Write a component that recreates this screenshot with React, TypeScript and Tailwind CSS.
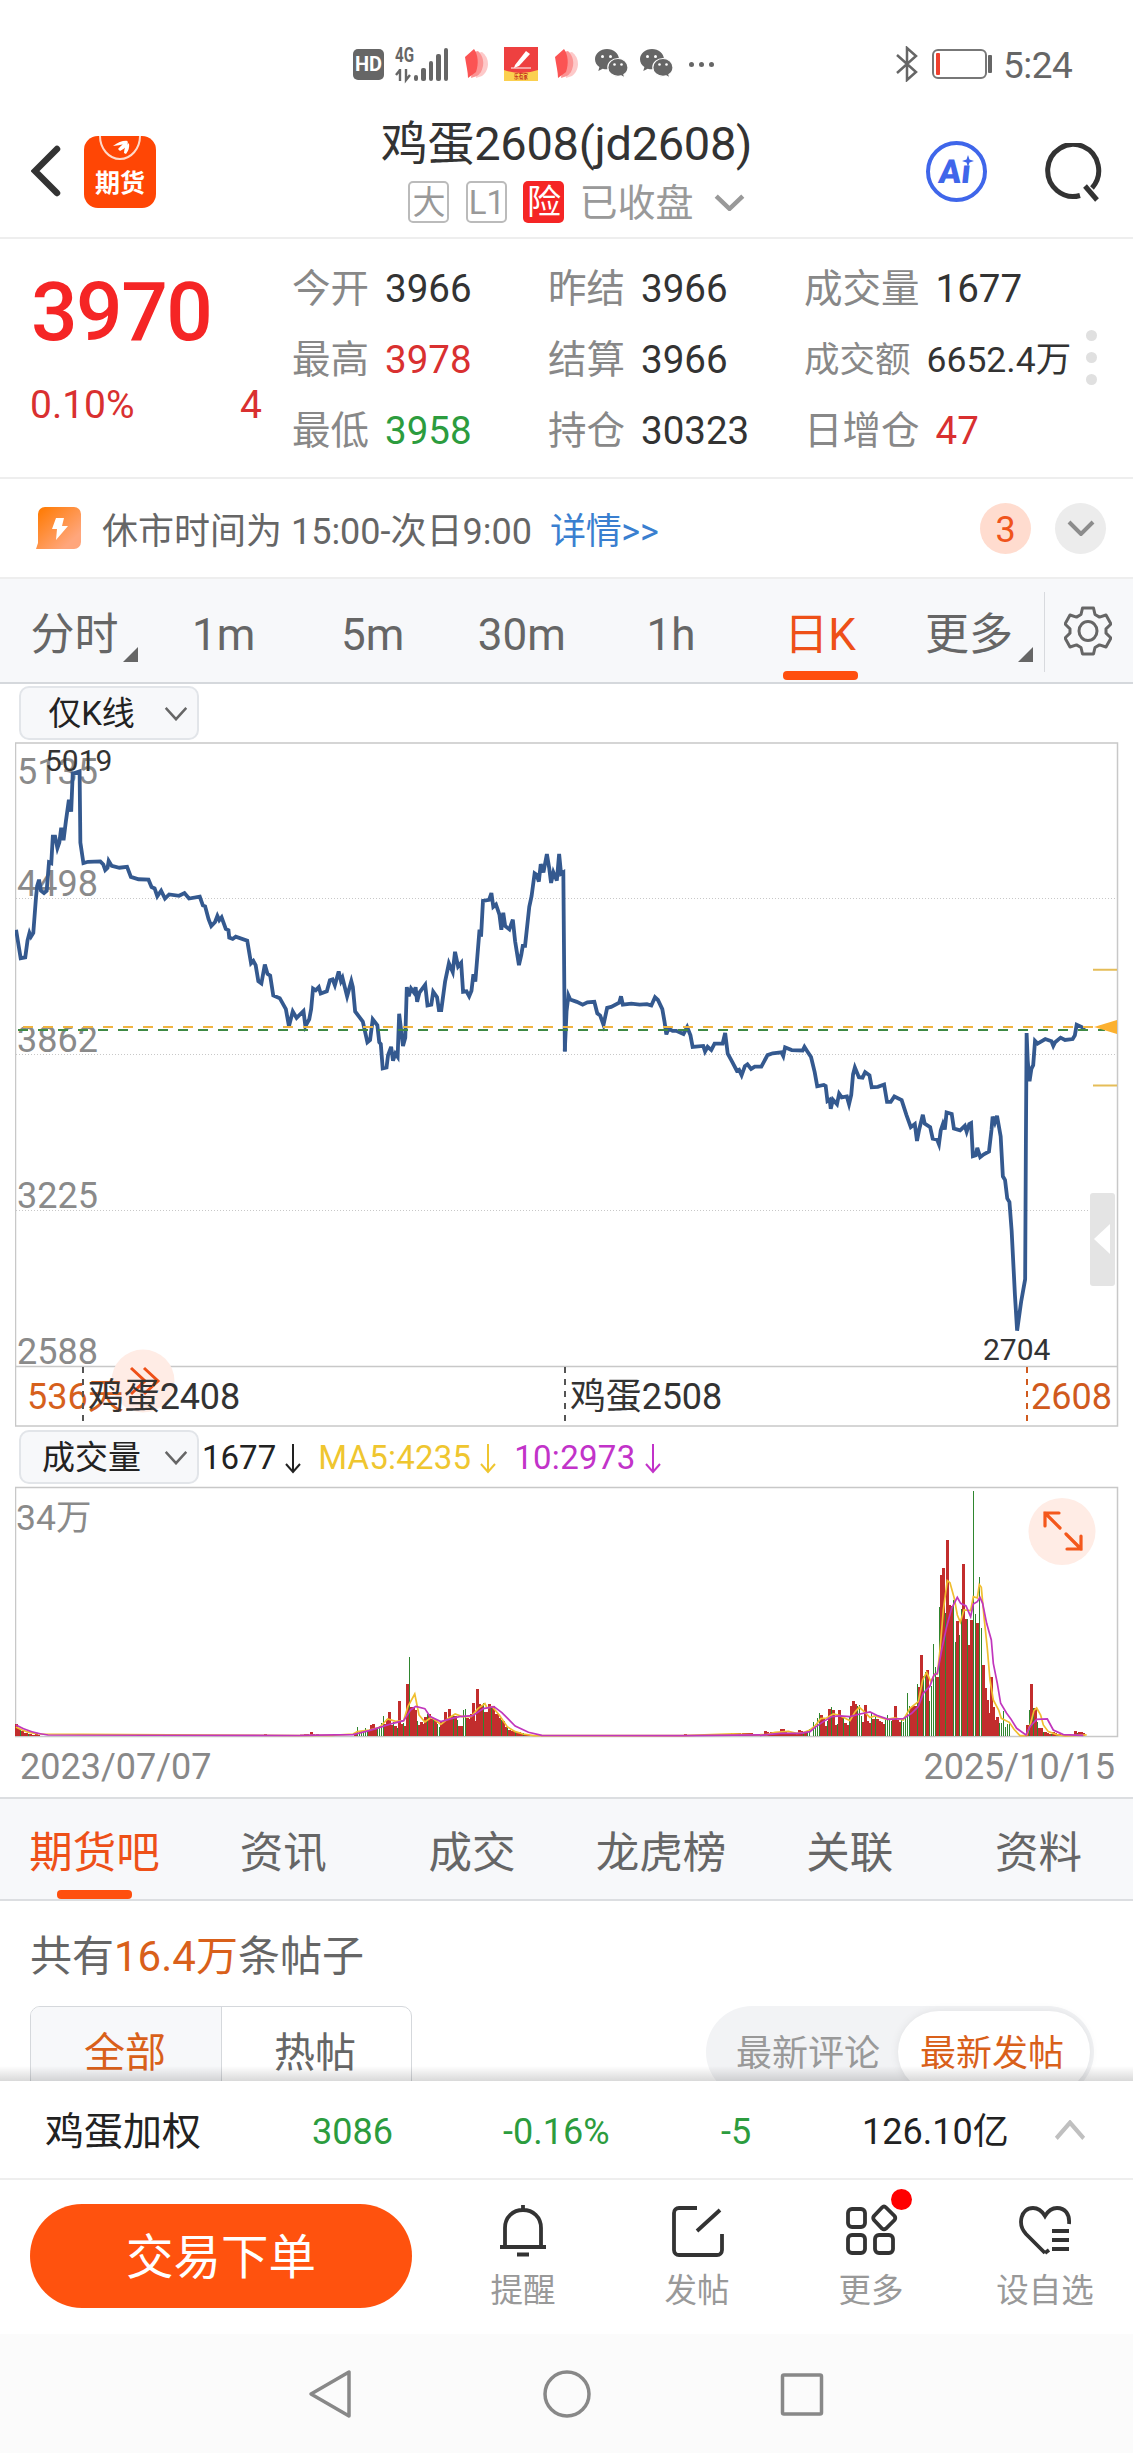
import React, { useState } from 'react';

const FONT = 'font-[Roboto,"Noto_Sans_CJK_SC",sans-serif]';

interface Quote {
  label: string;
  value: string;
  color?: string;
  small?: boolean;
}

const quotes: Quote[][] = [
  [
    { label: '今开', value: '3966' },
    { label: '最高', value: '3978', color: 'text-[#d93030]' },
    { label: '最低', value: '3958', color: 'text-[#2c9c3e]' },
  ],
  [
    { label: '昨结', value: '3966' },
    { label: '结算', value: '3966' },
    { label: '持仓', value: '30323' },
  ],
  [
    { label: '成交量', value: '1677' },
    { label: '成交额', value: '6652.4万', small: true },
    { label: '日增仓', value: '47', color: 'text-[#d93030]' },
  ],
];

const periods = ['分时', '1m', '5m', '30m', '1h', '日K', '更多'];
const sections = ['期货吧', '资讯', '成交', '龙虎榜', '关联', '资料'];

// price line, split at the 2508 contract switch
const priceLeft =
  '42,435 54,497 66,495 72,458 77,442 81,450 87,442 94,365 97,340 102,326 107,350 115,355 122,350 128,288 134,290 138,232 144,232 150,257 155,245 160,213 166,240 172,200 180,152 186,178 190,95 208,90 210,245 218,290 230,287 262,286 270,293 275,305 281,300 284,285 292,296 312,300 332,298 342,320 362,325 388,326 396,342 404,345 411,362 421,350 431,367 442,358 468,361 482,355 494,367 522,363 530,382 536,384 545,412 552,427 562,418 568,405 573,414 579,408 590,433 597,436 599,452 608,455 616,450 646,459 656,508 662,503 668,512 675,547 683,552 692,511 699,531 706,535 714,578 731,584 747,608 755,645 765,613 775,627 793,612 798,645 808,630 813,608 818,563 825,567 833,560 838,574 854,569 862,545 869,543 875,556 885,526 891,547 895,540 907,580 918,547 922,560 928,613 948,635 960,680 967,675 974,630 986,643 991,680 995,684 1000,737 1010,735 1014,708 1022,690 1027,720 1033,705 1039,712 1043,618 1053,688 1059,670 1063,560 1068,580 1074,563 1082,572 1086,560 1090,592 1096,572 1111,555 1117,600 1127,598 1132,570 1142,582 1147,610 1153,610 1163,548 1173,508 1183,527 1189,483 1197,515 1205,507 1210,570 1219,569 1226,580 1232,568 1237,532 1242,548 1253,435 1257,450 1262,372 1278,370 1284,355 1289,385 1296,380 1305,402 1310,435 1315,398 1320,427 1331,434 1340,413 1346,460 1356,512 1362,490 1366,470 1372,470 1383,385 1389,362 1397,312 1402,315 1408,330 1413,292 1420,310 1429,270 1435,300 1440,333 1446,310 1455,328 1461,270 1466,313 1472,310 1476,700';
const priceRight =
  '13,700 18,612 23,578 28,587 46,592 62,598 75,593 94,592 102,617 110,622 119,642 129,605 140,603 162,594 167,580 172,598 195,596 218,598 238,597 250,600 260,582 268,588 280,608 286,635 291,663 297,650 308,655 318,655 338,662 348,647 357,665 363,690 392,688 397,700 404,690 414,697 423,683 445,683 452,660 459,705 468,718 484,742 490,740 497,752 506,732 513,728 523,738 533,733 551,733 568,708 582,704 606,702 611,710 616,691 634,697 664,698 669,690 677,700 687,712 697,745 704,776 722,773 727,775 732,808 738,805 741,825 747,805 758,815 764,792 771,800 785,798 791,815 797,795 802,750 807,735 818,756 828,757 835,745 847,752 853,778 870,777 887,772 895,810 905,810 915,798 935,806 948,838 960,865 971,858 977,895 983,870 993,838 998,857 1013,865 1020,890 1032,892 1037,902 1042,872 1048,858 1053,870 1058,833 1072,836 1078,868 1095,872 1108,862 1113,875 1120,858 1125,856 1130,928 1138,926 1142,910 1150,930 1160,924 1174,918 1181,870 1184,842 1190,855 1196,840 1206,885 1212,972 1218,980 1224,1020 1230,1028 1236,1090 1245,1230 1251,1308 1262,1245 1273,1196 1275,900 1277,660 1280,720 1285,765 1290,738 1295,730 1300,677 1307,683 1328,673 1345,678 1350,688 1355,680 1370,670 1382,675 1403,673 1409,665 1414,642 1428,647 1436,652';

// volume bars: positive = up day, negative = down day
const volumeRuns: { start: number; step: number; bars: number[] }[] = [
  { start: 16, step: 2, bars: [12, 8, -6, 5, 3, 3, -2, 2, 1, 1, 2, 1] },
  { start: 265, step: 2, bars: [2, 0, 0, 0, 0, 0, 0, 0, 0, 0, 0, 0, 0, 0, 0, 0, 0, 0, 0, 0, 2, 2, 0, 4, 2, 0, 2] },
  {
    start: 355, step: 2,
    bars: [
      3, -9, -4, -5, -6, -8, -5, 6, 11, 12, 7, -8, -10, -13, -20, 12, 17, 24, 11, -14, 10, -8, 35, 12, -13, 10, 52, -79, 29, 28, 26,
      -15, 11, 14, 12, 19, -22, 22, 17, -17, 16, -12, -9, 14, 15, 24, 18, 27, 20, -21, 20, -16, 10, 10, -26, -27, 18, 17, 22, 33, 15,
      47, 32, 31, -33, 24, 24, 32, -30, 30, 22, 22, 18, -16, 15, 9, -9, 6, 5, 5, -4, 4, 4, 3, -3, 2, 2, 1,
    ],
  },
  { start: 685, step: 2, bars: [2, 0, 0, 0, 0, 0, 0, 0, 0, 1, 2, 1, -1, 2, 1, 2, 1, 1, 2, 1, 1, 2, 2, -3, 3, 3, 3, 3, 2, 3, 3, 3, 3, 3, 2, 2, 2, 1, 1, 2, 5, 4, 2, 4, 3, 2, 2, 2, 7, 7, 5, 2, 3, 3, 2, 2, 2, 6, 5, -4, 4, -5, -7] },
  {
    start: 813, step: 2,
    bars: [
      -14, -12, -18, -23, 21, 17, 10, -15, 27, -29, 26, 11, -12, 26, 19, -20, 13, 11, -20, 30, 35, 32, -30, -31, -20, 14, 31, 15, 13,
      -24, 17, -20, 17, 15, 14, 12, -17, -21, -18, -15, 18, 30, 16, 14, -16, -14, -20, -43, -30, 28, 30, 30, -52, 49, 81, -60, -64, 66,
      -35, -50, -92, -69, 59, -129, 161, 168, -123, 196, 131, 130, -136, -94, 115, -101, -127, 172, 117, -117, 91, 116, -245, -122, 113,
      -159, -108, 71, 48, 36, 23, 59, 29, 16, 19, -13, -13, -25, -9, -12, -12,
    ],
  },
  { start: 1027, step: 2, bars: [11, -26, 52, -28, 28, -14, 8, 8, -4, 4, 3, 2, -2, 4, 3, -2, 2, 1, 2, 2, 2, 1, 1, 1, 5, -3, 4, 4, 3] },
];

const Chevron = ({ className, sw = 3, up = false }: { className: string; sw?: number; up?: boolean }) => (
  <svg className={className} viewBox="0 0 28 16" fill="none" stroke="currentColor" strokeWidth={sw} preserveAspectRatio="none">
    <path d={up ? 'M2 14 14 2 26 14' : 'M2 2 14 14 26 2'} />
  </svg>
);

const Wechat = () => (
  <svg width="33" height="30" viewBox="0 0 33 30" fill="#666">
    <path d="M12 0C5.4 0 0 4.500 0 10.200c0 3.200 1.700 6 4.400 7.900L3.300 22l4.400-2.300c1.400.4 2.800.6 4.300.6 6.600 0 12-4.500 12-10.100S18.600 0 12 0z" />
    <path d="M23 9.500c-5.700 0-10.200 4-10.200 8.900S17.300 27.300 23 27.300c1.100 0 2.200-.2 3.200-.5l3.600 2.200-.9-3.500c2.500-1.600 4.100-4.200 4.100-7.100 0-4.900-4.500-8.900-10-8.900z" stroke="#fff" strokeWidth="1.200" />
    <g fill="#fff">
      <circle cx="7.500" cy="7.500" r="1.500" />
      <circle cx="15.500" cy="7.500" r="1.500" />
      <circle cx="19.500" cy="15.500" r="1.300" />
      <circle cx="26.500" cy="15.500" r="1.300" />
    </g>
  </svg>
);

const Petals = () => (
  <svg width="23" height="30" viewBox="0 0 23 30">
    <path d="M13 4 17 3c4 3 6 7 6 12s-3 10-6 12l-6 2z" fill="#fdc9c9" />
    <path d="M9 3 13 2c4 4 6 9 5 15-1 5-3 8-6 10l-6 2z" fill="#fb9494" />
    <path d="M0 8 9 0c4 6 5 14 2 23l-8 6C3 23 1 15 0 8z" fill="#fb5353" />
  </svg>
);

const StatusBar = () => (
  <div className="flex h-[128px] items-center pl-[353px] text-[#666]">
    <div className="flex h-[31px] w-[31px] items-center justify-center rounded-[5px] bg-[#666] text-[20px] leading-none font-bold text-white">HD</div>
    <svg className="ml-[11px] overflow-visible" width="54" height="34" viewBox="0 0 54 34" fill="#666">
      <text x="0" y="15" fontSize="20" fontWeight="700" textLength="19" lengthAdjust="spacingAndGlyphs">4G</text>
      <path d="M5 22v12M1 28l4-5M11 22v11l4-5" fill="none" stroke="#666" strokeWidth="2.400" />
      <rect x="19" y="28" width="4" height="6" rx="2" />
      <rect x="26" y="21" width="5" height="13" rx="2" />
      <rect x="34" y="14" width="4" height="20" rx="2" />
      <rect x="41" y="7" width="5" height="27" rx="2" />
      <rect x="49" y="1" width="4" height="33" rx="2" />
    </svg>
    <div className="ml-[16px]"><Petals /></div>
    <svg className="ml-[16px]" width="34" height="34" viewBox="0 0 34 34">
      <rect width="34" height="34" fill="#ee4040" />
      <path d="M0 23q17 6 34 0v11H0z" fill="#fbd04f" />
      <path d="M11 18 22 4l4 3-11 12-5 2z" fill="#fff" />
      <path d="M7 21h20" stroke="#fff" />
      <text x="17" y="32" textAnchor="middle" fontSize="7" fontWeight="700" fill="#c8341e" textLength="14" lengthAdjust="spacingAndGlyphs">乐有家</text>
    </svg>
    <div className="ml-[17px]"><Petals /></div>
    <div className="ml-[17px] flex gap-3"><Wechat /><Wechat /></div>
    <div className="ml-[16px] flex gap-[5px]">
      {[0, 1, 2].map(i => <span key={i} className="h-[5px] w-[5px] rounded-full bg-[#666]" />)}
    </div>
    <svg className="ml-[182px]" width="22" height="36" viewBox="0 0 22 36" fill="none" stroke="#666" strokeWidth="2.500">
      <path d="M1 9 20 26 11 34V2l9 8L1 27" />
    </svg>
    <svg className="ml-[14px]" width="62" height="30" viewBox="0 0 62 30">
      <rect x="1" y="1" width="53" height="28" rx="5" fill="none" stroke="#777" strokeWidth="2" />
      <rect x="4" y="4" width="4" height="22" rx="1" fill="#f0402e" />
      <rect x="56" y="6" width="4" height="18" rx="1" fill="#666" />
    </svg>
    <span className="mt-[3px] ml-[9px] text-[37px] leading-none tracking-[-0.5px]">5:24</span>
  </div>
);

const Header = () => (
  <header className="flex h-[111px] border-b-2 border-[#eee]">
    <div className="flex w-[300px] items-start pt-[8px] pl-[31px]">
      <svg className="mt-[8px]" width="32" height="54" viewBox="0 0 32 54" fill="none" stroke="#333" strokeWidth="6.500" strokeLinecap="round">
        <path d="M26 5 4 27 26 49" />
      </svg>
      <div className="relative ml-[21px] flex h-[72px] w-[72px] items-end justify-center overflow-hidden rounded-[14px] bg-[#ff4605] pb-[12px]">
        <svg className="absolute top-0 left-[14px]" width="44" height="26" viewBox="0 0 44 26" fill="none">
          <path d="M2 0a20 23 0 0 0 40 0" stroke="#ffd9c9" strokeWidth="2" />
          <path d="M15 10q8-6 15-5-2 4-15 5zM20 13q5-6 10-7 0 5-8 9zM26 17q0-6 5-10 1 6-3 11z" fill="#fff" />
        </svg>
        <span className="text-[25px] leading-none font-bold text-white">期货</span>
      </div>
    </div>
    <div className="flex w-[533px] flex-col items-center">
      <h1 className="mt-[-8px] text-[47px] leading-[48px] font-normal tracking-[-0.3px] whitespace-nowrap text-[#333]">鸡蛋2608(jd2608)</h1>
      <div className="mt-[13px] ml-[20px] flex items-center text-[#999]">
        <span className="flex h-[42px] w-[41px] items-center justify-center rounded-[5px] border-2 border-[#bbb] text-[33px] leading-none">大</span>
        <span className="ml-[17px] flex h-[42px] w-[41px] items-center justify-center rounded-[5px] border-2 border-[#bbb] text-[33px] leading-none">L1</span>
        <span className="ml-[16px] flex h-[42px] w-[41px] items-center justify-center rounded-[5px] bg-[#f52525] text-[34px] leading-none text-white">险</span>
        <span className="ml-[15px] pt-[2px] text-[38px] leading-none">已收盘</span>
        <Chevron className="ml-[20px] h-[17px] w-[31px]" sw={4} />
      </div>
    </div>
    <div className="flex items-start pt-[13px] pl-[93px]">
      <div className="relative flex h-[61px] w-[61px] items-center justify-center rounded-full border-4 border-[#3f66ea] pr-1 text-[#3f66ea]">
        <span className="-skew-x-6 text-[33px] leading-none font-black">Aı</span>
        <svg className="absolute top-[10px] right-[9px]" width="12" height="12" viewBox="0 0 12 12" fill="#3f66ea">
          <path d="M6 0 7.500 4.500 12 6 7.500 7.500 6 12 4.500 7.500 0 6 4.500 4.500z" />
        </svg>
      </div>
      <svg className="mt-[2px] ml-[55px]" width="62" height="62" viewBox="0 0 62 62" fill="none" stroke="#333" strokeWidth="5">
        <path d="M38 52.500A25.500 26 0 1 1 50 45" />
        <path d="M43 43l12 14" strokeLinecap="butt" />
      </svg>
    </div>
  </header>
);

const QuotePanel = () => (
  <section className="flex h-[240px] border-b-2 border-[#eee]">
    <div className="w-[292px] pt-[33px] pl-[31px]">
      <div className="text-[82px] leading-[80px] font-medium tracking-[-1.500px] text-[#f52525]">3970</div>
      <div className="mt-[33px] ml-[-1px] flex w-[232px] justify-between text-[39px] leading-[40px] text-[#d93030]">
        <span>0.10%</span>
        <span>4</span>
      </div>
    </div>
    {quotes.map((col, i) => (
      <div key={i} className={`${i === 2 ? 'w-[277px]' : 'w-[256px]'} pt-[15px]`}>
        {col.map(q => (
          <div key={q.label} className={`flex h-[71px] items-center gap-[16px] leading-none whitespace-nowrap ${q.small ? 'text-[35.500px]' : 'text-[38.500px]'}`}>
            <span className="text-[#888]">{q.label}</span>
            <span className={q.color ?? 'text-[#333]'}>{q.value}</span>
          </div>
        ))}
      </div>
    ))}
    <div className="ml-[5px] flex flex-col gap-[11px] pt-[91px]">
      {[0, 1, 2].map(i => <span key={i} className="h-[11px] w-[11px] rounded-full bg-[#e0e0e0]" />)}
    </div>
  </section>
);

const Notice = () => (
  <div className="flex h-[100px] items-center border-b-2 border-[#eee] pl-[36px] text-[36px] leading-none text-[#666]">
    <svg width="45" height="42" viewBox="0 0 45 42">
      <defs>
        <linearGradient id="tip" x1="0" y1="0" x2="1" y2="1">
          <stop offset=".1" stopColor="#ff7d0a" />
          <stop offset=".8" stopColor="#ffa67c" />
        </linearGradient>
      </defs>
      <path d="M9 0h29a7 7 0 0 1 7 7v28a7 7 0 0 1-7 7H0l2-6V7a7 7 0 0 1 7-7z" fill="url(#tip)" />
      <path d="M20 11h8l-2 8h6L20 33l1-11h-5z" fill="#fff" />
    </svg>
    <span className="ml-[21px] pt-[7px] whitespace-pre">休市时间为 15:00-次日9:00</span>
    <span className="ml-[18px] pt-[7px] tracking-[-0.300px] text-[#3a7fd0]">详情&gt;&gt;</span>
    <span className="ml-auto flex h-[51px] w-[51px] items-center justify-center rounded-full bg-[#ffdccf] pt-[4px] text-[#f0541c]">3</span>
    <span className="mr-[27px] ml-[24px] flex h-[51px] w-[51px] items-center justify-center rounded-full bg-[#ececec] text-[#8c8c8c]">
      <Chevron className="h-[16px] w-[28px]" sw={4} />
    </span>
  </div>
);

const PeriodTabs = () => {
  const [active, setActive] = useState('日K');
  return (
    <nav className="flex h-[105px] border-b-2 border-[#d5d8dc] bg-[#f7f8fa]">
      {periods.map(p => (
        <button
          key={p}
          onClick={() => setActive(p)}
          className={`relative flex h-[103px] w-[149.100px] items-center justify-center pt-[8px] text-[44px] leading-none ${active === p ? 'text-[#ee5018]' : 'text-[#666]'}`}
        >
          {p}
          {(p === '分时' || p === '更多') && (
            <svg className="absolute right-[11px] bottom-[20px]" width="15" height="15" viewBox="0 0 15 15"><path d="M15 0v15H0z" fill="#666" /></svg>
          )}
          {active === p && <span className="absolute bottom-[2px] h-[9px] w-[75px] rounded-[4px] bg-[#ff4f0e]" />}
        </button>
      ))}
      <div className="mt-[13px] h-[80px] w-px bg-[#d8dade]" />
      <svg className="mt-[27px] ml-[19px]" width="48" height="50" viewBox="0 0 48 50" fill="none" stroke="#666" strokeWidth="3" strokeLinejoin="round">
        <path d="M18.500 2h11l1.500 6.500 4.500 2.600L42 9l5 9-5 4.800v4.400L47 32l-5 9-6.500-2.100-4.500 2.600L29.500 48h-11L17 41.500l-4.500-2.600L6 41l-5-9 5-4.800v-4.400L1 18l5-9 6.500 2.100L17 8.500z" />
        <ellipse cx="24" cy="25" rx="9" ry="9.500" />
      </svg>
    </nav>
  );
};

const IndicatorChip = ({ name }: { name: string }) => (
  <button className="flex h-[54px] w-[180px] items-center justify-between rounded-[10px] border-2 border-[#e2e5e9] bg-[#f7f8fa] pr-[9px] text-[33px] leading-none text-[#222]">
    <span className="flex-1 pr-[2px] text-center">{name}</span>
    <Chevron className="h-[15px] w-[24px] text-[#666]" sw={3} />
  </button>
);

const PriceChart = () => (
  <svg className="mt-[2px] ml-[15px] block" width="1104" height="685" viewBox="15 742 1104 685" fontFamily='Roboto, "Noto Sans CJK SC", sans-serif'>
    <g stroke="#c8c8c8" strokeWidth="1.500" fill="none">
      <rect x="15.500" y="743" width="1102" height="683" />
      <path d="M15 1366.500h1102" />
      <path d="M16 898.500h1100M16 1054.500h1100M16 1210.500h1100" strokeWidth="1" strokeDasharray="1 2" />
    </g>
    <g fontSize="36" fill="#8a8a8a">
      <text x="17" y="784">5135</text>
      <text x="17" y="896">4498</text>
      <text x="17" y="1052">3862</text>
      <text x="17" y="1208">3225</text>
      <text x="17" y="1364">2588</text>
    </g>
    <g fill="none" stroke="#34598f" strokeWidth="3.800">
      <polyline points={priceLeft} transform="translate(0 730) scale(.3827 .4592)" vectorEffect="non-scaling-stroke" />
      <polyline points={priceRight} transform="translate(560 730) scale(.3654 .4592)" vectorEffect="non-scaling-stroke" />
    </g>
    <path d="M23 1027H1096" stroke="#f0b440" strokeWidth="2" strokeDasharray="10 10" />
    <path d="M18 1030H1105" stroke="#3f8a45" strokeWidth="2" strokeDasharray="10 10" />
    <path d="M1093 969.700h24M1093 1085.500h24" stroke="#e5bd58" strokeWidth="2" />
    <path d="M1094 1027l23-7v14z" fill="#fcb130" />
    <rect x="1090" y="1193" width="25" height="93" rx="3" fill="#e4e4e4" />
    <path d="M1094 1239l16-15v30z" fill="#fff" />
    <g fontSize="30" fill="#333">
      <text x="45" y="771">5019</text>
      <text x="983" y="1360">2704</text>
    </g>
    <circle cx="143" cy="1381" r="31.500" fill="#ffece5" />
    <g fontSize="36">
      <text x="27" y="1409" fill="#d6601c">536天</text>
      <path d="M131 1368l14 13-14 13M144 1368l14 13-14 13" fill="none" stroke="#ee5018" strokeWidth="3" />
      <text x="88" y="1409" fill="#333" letterSpacing="-.15">鸡蛋2408</text>
      <text x="570" y="1409" fill="#333" letterSpacing="-.15">鸡蛋2508</text>
      <text x="1031" y="1409" fill="#d05a1e">2608</text>
    </g>
    <g fill="none" strokeWidth="2" strokeDasharray="6 6">
      <path d="M83 1367v54M565 1367v54" stroke="#555" />
      <path d="M1027 1367v54" stroke="#d05a1e" />
    </g>
  </svg>
);

const DownArrow = () => (
  <svg className="mx-[9px] mt-[4px]" width="16" height="30" viewBox="0 0 16 30" fill="none" stroke="currentColor" strokeWidth="2">
    <path d="M8 0v28M1 20l7 8 7-8" />
  </svg>
);

const VolumeLegend = () => (
  <div className="mt-[3px] flex h-[54px] items-center pl-[19px] text-[33px] leading-none">
    <IndicatorChip name="成交量" />
    <span className="ml-[3px] flex items-center text-[#222]">1677<DownArrow /></span>
    <span className="ml-[8px] flex items-center tracking-[0.200px] text-[#efc62f]">MA5:4235<DownArrow /></span>
    <span className="ml-[9px] flex items-center tracking-[0.300px] text-[#c233c9]">10:2973<DownArrow /></span>
  </div>
);

const VolumeChart = () => (
  <svg className="mt-[2px] ml-[15px] block" width="1104" height="252" viewBox="15 1486 1104 252" fontFamily='Roboto, "Noto Sans CJK SC", sans-serif'>
    <rect x="15.500" y="1487.500" width="1102" height="249" fill="none" stroke="#c8c8c8" strokeWidth="1.500" />
    <text x="16" y="1530" fontSize="35.500" fill="#8a8a8a">34万</text>
    <g shapeRendering="crispEdges">
      {volumeRuns.map(run =>
        run.bars.map((v, i) =>
          v > 0 ? <rect key={`${run.start}-${i}`} x={run.start + i * run.step - 1} y={1736 - v} width="3" height={v} fill="#c22d2d" /> : null
        )
      )}
      {volumeRuns.map(run =>
        run.bars.map((v, i) =>
          v < 0 ? <rect key={`${run.start}-${i}`} x={run.start + i * run.step} y={1736 + v} width="1" height={-v} fill="#2f862f" /> : null
        )
      )}
    </g>
    <g fill="none" strokeWidth="1.700">
      <g stroke="#f0be30">
        <path d="M16 1727q10 6 24 7l260 1.500" />
        <polyline vectorEffect="non-scaling-stroke" transform="translate(300 1480) scale(.5313 .3333)" points="0,766 60,766 100,762 108,755 130,750 150,742 165,717 180,724 195,722 203,680 216,642 224,705 235,726 247,712 265,733 280,714 292,702 305,710 322,710 335,686 348,671 352,684 362,680 375,705 390,740 405,755 420,762 440,767 720,767 815,762 866,765" />
        <polyline vectorEffect="non-scaling-stroke" transform="translate(760 1480) scale(.3333)" points="0,764 20,764 45,757 85,754 110,760 130,758 150,750 165,738 182,716 200,714 220,702 240,707 270,722 285,696 298,682 315,697 330,713 345,708 380,718 405,714 430,720 450,685 475,665 488,600 500,577 512,604 525,582 532,583 540,510 550,390 562,302 570,308 583,355 592,405 601,427 612,390 632,392 640,350 652,354 658,314 664,322 672,410 682,505 690,600 700,660 716,690 724,715 748,727 762,748 780,767 800,767 812,730 822,692 830,684 842,705 850,735 865,755 890,764 915,768 950,766 980,765" />
      </g>
      <g stroke="#c136bd">
        <path d="M16 1725q14 8 32 10l252 .5" />
        <polyline vectorEffect="non-scaling-stroke" transform="translate(300 1480) scale(.5313 .3333)" points="0,766 100,764 130,752 155,740 175,730 195,722 208,690 218,679 235,686 245,710 265,725 285,716 300,710 325,707 345,686 365,680 380,698 405,738 430,757 455,766 720,767 866,765" />
        <polyline vectorEffect="non-scaling-stroke" transform="translate(760 1480) scale(.3333)" points="0,766 60,760 120,760 150,755 165,742 190,725 215,710 240,708 270,710 300,702 330,696 350,706 385,718 430,716 455,700 475,680 490,640 510,618 522,585 532,580 545,510 560,440 575,385 592,352 602,370 618,378 632,410 640,372 652,365 660,352 668,370 680,430 694,480 700,550 712,610 722,670 740,700 752,716 770,745 798,765 810,740 830,718 862,717 880,750 910,764 970,766" />
      </g>
    </g>
    <circle cx="1062" cy="1531.500" r="33.500" fill="#ffece5" />
    <path d="M1060 1528l-15-15M1045 1526v-13h14M1066 1534l15 15M1081 1536v13h-14" fill="none" stroke="#f4581c" strokeWidth="3.200" strokeLinecap="round" />
  </svg>
);

const SectionTabs = () => {
  const [active, setActive] = useState('期货吧');
  return (
    <nav className="flex h-[104px] border-y-2 border-[#dcdee1] bg-[#f7f8fa]">
      {sections.map(s => (
        <button
          key={s}
          onClick={() => setActive(s)}
          className={`relative flex w-[189px] items-center justify-center pt-[9px] text-[43.500px] leading-none ${active === s ? 'text-[#ee5018]' : 'text-[#666]'}`}
        >
          {s}
          {active === s && <span className="absolute bottom-0 h-[9px] w-[75px] rounded-[4px] bg-[#ff4f0e]" />}
        </button>
      ))}
    </nav>
  );
};

const Posts = () => (
  <section className="relative h-[180px] overflow-hidden px-[30px]">
    <p className="pt-[35px] text-[42px] leading-[42px] text-[#666]">
      共有<span className="text-[#d9601a]">16.4万</span>条帖子
    </p>
    <div className="mt-[28px] flex h-[92px] justify-between">
      <div className="flex w-[382px] overflow-hidden rounded-[10px] border border-[#d5d8dc] pr-px text-[41px] leading-none">
        <span className="flex w-[191px] items-center justify-center border-r border-[#d5d8dc] bg-[#f7f8fa] pt-[3px] pr-[2px] text-[#d9601a]">全部</span>
        <span className="flex flex-1 items-center justify-center pt-[3px] pr-[2px] text-[#666]">热帖</span>
      </div>
      <div className="mr-[9px] flex w-[388px] rounded-full bg-[#f2f3f5] py-[5px] pr-[4px] text-[36px] leading-none">
        <span className="flex flex-1 items-center justify-center pt-[3px] pl-[12px] text-[#999]">最新评论</span>
        <span className="flex w-[192px] items-center justify-center rounded-full bg-white pt-[3px] pr-1 text-[#d9601a] shadow-[0_0_10px_rgba(0,0,0,0.08)]">最新发帖</span>
      </div>
    </div>
    <div className="absolute inset-x-0 bottom-0 h-[15px] bg-linear-to-b from-transparent to-black/15" />
  </section>
);

const IndexBar = () => (
  <div className="flex h-[99px] items-center border-b-2 border-[#eee] pt-[5px] pl-[45px] text-[36px] leading-none text-[#222]">
    <span className="w-[267px] text-[39px]">鸡蛋加权</span>
    <span className="w-[191px] text-[#2c9c3e]">3086</span>
    <span className="w-[218px] text-[#2c9c3e]">-0.16%</span>
    <span className="w-[141px] text-[#2c9c3e]">-5</span>
    <span className="w-[192px]">126.10亿</span>
    <Chevron className="mb-[4px] h-[21px] w-[32px] text-[#c0c0c0]" sw={3.5} up />
  </div>
);

const actions = [
  {
    label: '提醒',
    icon: <path d="M27 6V1M9 42V24C9 13 17 6 27 6s18 7 18 18v18M4 43h46M21 50.500h12" />,
  },
  {
    label: '发帖',
    icon: <path d="M27 4H9a5 5 0 0 0-5 5v37a5 5 0 0 0 5 5h38a5 5 0 0 0 5-5V30M27 27 50 6" />,
  },
  {
    label: '更多',
    icon: (
      <>
        <rect x="4" y="5" width="17" height="18" rx="4" />
        <rect x="4" y="31" width="17" height="18" rx="4" />
        <rect x="31" y="31" width="18" height="18" rx="4" />
        <path d="M40 2.500q1 0 2 1l8.500 8.500q1.500 2 0 4L42 24.500q-2 1.500-4 0L30 16q-1.500-2 0-4l8-8.500q1-1 2-1z" />
      </>
    ),
  },
  {
    label: '设自选',
    icon: <path d="M27 49 8 30C-1 20 3 4 15 4c6 0 9 3 12 8 3-5 6-8 12-8 8 0 13 6 12 16M27 49l4-3M34 27h17M34 36h17M34 45h17" />,
  },
];

const ActionBar = () => (
  <footer className="flex h-[154px]">
    <button className="mt-[24px] ml-[30px] flex h-[104px] w-[382px] items-center justify-center rounded-full bg-[#ff520e] pt-[6px] text-[47.500px] leading-none text-white">交易下单</button>
    <div className="ml-[24px] flex">
      {actions.map(a => (
        <button key={a.label} className="relative flex w-[174px] flex-col items-center pt-[24px] text-[32.500px] leading-none text-[#999]">
          <svg width="54" height="54" viewBox="0 0 54 54" fill="none" stroke="#333" strokeWidth="3.800">{a.icon}</svg>
          <span className="mt-[17px]">{a.label}</span>
          {a.label === '更多' && <span className="absolute top-[9px] left-[107px] h-[21px] w-[21px] rounded-full bg-[#ff0000]" />}
        </button>
      ))}
    </div>
  </footer>
);

const NavBar = () => (
  <div className="flex h-[119px] items-center justify-center gap-[188px] bg-[#fbfbfb]">
    <svg width="48" height="50" viewBox="0 0 48 50" fill="none" stroke="#888" strokeWidth="3.500" strokeLinejoin="round"><path d="M42 3v44L4 25z" /></svg>
    <svg width="48" height="50" viewBox="0 0 48 50" fill="none" stroke="#888" strokeWidth="3.500"><circle cx="24" cy="25" r="22" /></svg>
    <svg width="48" height="50" viewBox="0 0 48 50" fill="none" stroke="#888" strokeWidth="3.500"><rect x="3.500" y="6" width="39" height="39" rx="1.500" /></svg>
  </div>
);

const App: React.FC = () => (
  <div className={`h-[2453px] w-[1133px] overflow-hidden bg-white ${FONT}`}>
    <StatusBar />
    <Header />
    <QuotePanel />
    <Notice />
    <PeriodTabs />
    <div className="mt-[2px] pl-[19px]">
      <IndicatorChip name="仅K线" />
    </div>
    <PriceChart />
    <VolumeLegend />
    <VolumeChart />
    <div className="flex h-[59px] items-center justify-between pr-[18px] pb-[1px] pl-[20px] text-[36px] leading-none text-[#888]">
      <span>2023/07/07</span>
      <span>2025/10/15</span>
    </div>
    <SectionTabs />
    <Posts />
    <IndexBar />
    <ActionBar />
    <NavBar />
  </div>
);

export default App;
